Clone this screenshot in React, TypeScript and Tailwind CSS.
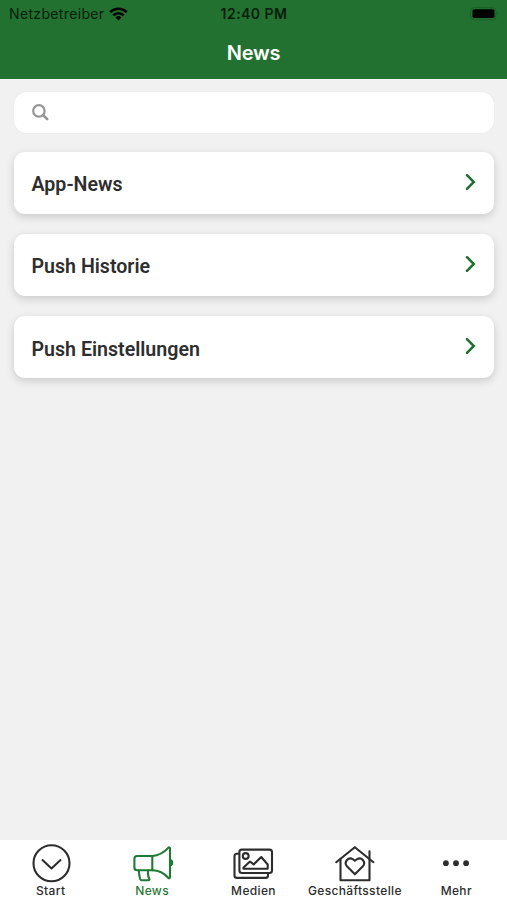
import { useState } from 'react';
import type { ReactNode } from 'react';

type TabId = 'start' | 'news' | 'media' | 'office' | 'more';

interface Tab {
  id: TabId;
  label: string;
  icon: ReactNode;
}

const entries = ['App-News', 'Push Historie', 'Push Einstellungen'];

const tabs: Tab[] = [
  {
    id: 'start',
    label: 'Start',
    icon: (
      <>
        <circle cx="24.5" cy="23.3" r="18" />
        <path d="M15.5 20.1 24.5 28.6 33.5 20.1" />
      </>
    ),
  },
  {
    id: 'news',
    label: 'News',
    icon: (
      <>
        <path d="M24.3 16H9.2a2.8 2.8 0 0 0-2.8 2.8v8.700a2.8 2.8 0 0 0 2.8 2.8h15.100z" />
        <path d="M24.3 16C31 15.5 36.5 12 40.2 7.900c.8-.9 1.800-.5 1.800.7v28.500c0 1.200-1 1.600-1.800.7C36.500 33.500 31 30.500 24.300 30.300" />
        <path d="M10.800 30.500c.2 3 .6 6.200 1.300 8.500.3.800.9 1.200 1.700 1.200h6.600c.9 0 1.300-.8.900-1.500-.9-1.500-1.300-3-1.300-4.900v-3.300" />
        <path d="M42.300 20.300c2.500.3 2.500 4.700 0 5z" fill="currentColor" />
      </>
    ),
  },
  {
    id: 'media',
    label: 'Medien',
    icon: (
      <>
        <rect x="10.4" y="9.6" width="32.6" height="23.4" rx="2.5" />
        <path d="M10 13.7H8a2.5 2.5 0 0 0-2.5 2.5v19.200A2.5 2.5 0 0 0 8 37.9h28.500a2.5 2.5 0 0 0 2.5-2.5V33.500" />
        <circle cx="16.7" cy="16" r="2.9" />
        <path d="M14.5 28.800v-1.300l6.500-6 3.600 2.900 7.600-7.400 6.500 7.500v4.300z" />
      </>
    ),
  },
  {
    id: 'office',
    label: 'Geschäftsstelle',
    icon: (
      <>
        <path d="M5.200 22.200 23.800 7.200l18.600 15" />
        <path d="M9.500 19v21.300h29V11.300" />
        <path d="m23.900 34.200-7.700-7.600c-4-4.100 1-10.400 5.800-7.300l1.900 1.500 1.900-1.500c4.800-3.100 9.800 3.200 5.800 7.300z" />
      </>
    ),
  },
  {
    id: 'more',
    label: 'Mehr',
    icon: (
      <g fill="currentColor" stroke="none">
        <circle cx="13.9" cy="23.2" r="2.9" />
        <circle cx="24" cy="23.2" r="2.9" />
        <circle cx="34.1" cy="23.2" r="2.9" />
      </g>
    ),
  },
];

function StatusBar() {
  return (
    <div className="grid h-[27px] grid-cols-3 items-center pr-[7px] pl-[9px] text-[14px] text-[#07200c]">
      <div className="flex items-center gap-[5px]">
        <span className="tracking-[0.35px]">Netzbetreiber</span>
        <svg width="19" height="14" viewBox="0 0 19 14" fill="none" stroke="#000" strokeWidth="2.6">
          <path d="M1.200 5.200a11.700 11.700 0 0 1 16.600 0" />
          <path d="M4.300 8.400a7.400 7.400 0 0 1 10.400 0" />
          <path d="M9.500 13.500 6.500 10.500a4.300 4.300 0 0 1 6 0z" fill="#000" stroke="none" />
        </svg>
      </div>
      <span className="-ml-[1px] text-center font-semibold tracking-[0.45px] whitespace-nowrap">12:40 PM</span>
      <svg className="justify-self-end" width="30" height="14" viewBox="0 0 30 14">
        <rect x="0.5" y="0.7" width="25.5" height="12" rx="3.5" fill="none" stroke="#1a5f28" />
        <rect x="2.5" y="2.3" width="22" height="8.7" rx="1.8" fill="#000" />
        <path d="M27.500 5v3.500c1.500-.4 1.500-3.100 0-3.500z" fill="#1a5f28" />
      </svg>
    </div>
  );
}

function SearchField() {
  return (
    <label className="flex h-[41px] items-center gap-3 rounded-[13px] bg-white pl-[18px] shadow-[0_0_2px_rgba(0,0,0,0.06)]">
      <svg width="17" height="17" viewBox="0 0 17 17" fill="none" stroke="#969696" strokeLinecap="round">
        <circle cx="6.9" cy="6.9" r="5.7" strokeWidth="2.2" />
        <path d="m11.500 11.500 3.700 3.700" strokeWidth="2.6" />
      </svg>
      <input type="text" className="min-w-0 flex-1 bg-transparent outline-none" />
    </label>
  );
}

export default function App() {
  const [activeTab, setActiveTab] = useState<TabId>('news');

  return (
    <div className="flex h-screen flex-col bg-[#f1f1f1] font-['Inter','Liberation_Sans',sans-serif]">
      <header className="h-[79px] bg-[#227131]">
        <StatusBar />
        <h1 className="mt-[11px] text-center text-[20px] leading-[30px] font-semibold tracking-[-0.2px] text-white">News</h1>
      </header>

      <main className="flex-1 px-[13.5px] pt-[12.5px]">
        <SearchField />
        <div className="mt-[19px] flex flex-col gap-[20.2px]">
          {entries.map((entry) => (
            <button
              key={entry}
              type="button"
              className="flex h-[62px] items-center justify-between rounded-[11px] bg-white pr-[18px] pl-[18px] shadow-[0_3px_8px_rgba(0,0,0,0.16)]"
            >
              <span className="pt-[5px] font-['Roboto',sans-serif] text-[19.6px] font-semibold text-[#2e2e2e]">{entry}</span>
              <svg className="mb-[1px]" width="11" height="16" viewBox="0 0 11 16" fill="none" stroke="#1f7030" strokeWidth="2.5" strokeLinecap="round">
                <path d="m2 1.200 6.800 6.800L2 14.800" />
              </svg>
            </button>
          ))}
        </div>
      </main>

      <nav className="grid h-[60px] grid-cols-5 bg-white">
        {tabs.map((tab) => (
          <button
            key={tab.id}
            type="button"
            className={`flex min-w-0 flex-col items-center ${activeTab === tab.id ? 'text-[#1f7a35]' : 'text-[#2d2d2d]'}`}
            onClick={() => setActiveTab(tab.id)}
          >
            <svg
              className="shrink-0"
              width="48"
              height="43"
              viewBox="0 0 48 43"
              fill="none"
              stroke="currentColor"
              strokeWidth="2.1"
              strokeLinecap="round"
              strokeLinejoin="round"
            >
              {tab.icon}
            </svg>
            <span className="text-[12px] leading-[16px] font-medium tracking-[0.35px] whitespace-nowrap">{tab.label}</span>
          </button>
        ))}
      </nav>
    </div>
  );
}
